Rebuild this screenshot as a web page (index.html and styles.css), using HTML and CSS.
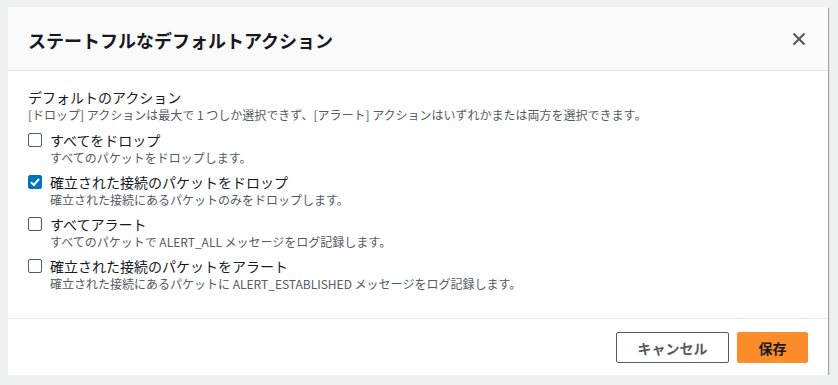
FILE: index.html
```html
<!DOCTYPE html>
<html lang="ja">
<head>
<meta charset="utf-8">
<link rel="stylesheet" href="styles.css">
</head>
<body>
<div class="modal">
  <div class="header">
    <h2 class="title">ステートフルなデフォルトアクション</h2>
    <svg class="close" width="14" height="14" viewBox="0 0 14 14"><path d="M1.5 1.5 L12.5 12.5 M12.5 1.5 L1.5 12.5" stroke="#545b64" stroke-width="2.2" fill="none"/></svg>
  </div>
  <div class="body">
    <div class="label">デフォルトのアクション</div>
    <div class="hint">[ドロップ] アクションは最大で 1 つしか選択できず、[アラート] アクションはいずれかまたは両方を選択できます。</div>
    <div class="options">
      <div class="opt">
        <span class="box"></span>
        <div class="txt"><div class="name">すべてをドロップ</div><div class="desc">すべてのパケットをドロップします。</div></div>
      </div>
      <div class="opt">
        <span class="box checked"><svg width="14" height="14" viewBox="0 0 14 14"><path d="M3 7.2 L5.9 10 L11 4" stroke="#fff" stroke-width="2" fill="none"/></svg></span>
        <div class="txt"><div class="name">確立された接続のパケットをドロップ</div><div class="desc">確立された接続にあるパケットのみをドロップします。</div></div>
      </div>
      <div class="opt">
        <span class="box"></span>
        <div class="txt"><div class="name">すべてアラート</div><div class="desc">すべてのパケットで ALERT_ALL メッセージをログ記録します。</div></div>
      </div>
      <div class="opt">
        <span class="box"></span>
        <div class="txt"><div class="name">確立された接続のパケットをアラート</div><div class="desc">確立された接続にあるパケットに ALERT_ESTABLISHED メッセージをログ記録します。</div></div>
      </div>
    </div>
  </div>
  <div class="footer">
    <button class="btn cancel">キャンセル</button>
    <button class="btn save">保存</button>
  </div>
</div>
</body>
</html>
```
FILE: styles.css
```css
html, body { margin: 0; padding: 0; }
body {
  background: #eff1f0;
  font-family: "Noto Sans CJK JP", "Noto Sans", sans-serif;
  color: #16191f;
  padding: 7px 10px 0 8px;
}
.modal {
  width: 820px;
  height: 368px;
  background: #fff;
  box-shadow: 1px 1px 1px 0 rgba(0,28,36,0.35);
  display: flex;
  flex-direction: column;
}
.header {
  height: 63px;
  background: #fafafa;
  border-bottom: 1px solid #e6e7e8;
  display: flex;
  align-items: center;
  justify-content: space-between;
  padding: 0 22px 0 20px;
}
.title {
  margin: 0;
  font-size: 18px;
  font-weight: 700;
  line-height: 24px;
  padding-top: 2px;
}
.close { display: block; margin-top: 1px; }
.body {
  flex: 1;
  padding: 16px 20px 0 20px;
  border-bottom: 1px solid #e6e7e8;
}
.label { font-size: 14px; line-height: 20px; }
.hint { font-size: 12px; line-height: 16px; color: #545b64; }
.options { margin-top: 7px; display: flex; flex-direction: column; gap: 6px; }
.opt { display: flex; align-items: flex-start; gap: 8px; }
.box {
  width: 14px; height: 14px; box-sizing: border-box;
  border: 1px solid #545b64; border-radius: 2px;
  margin-top: 3px;
  display: flex;
}
.box.checked { background: #0073bb; border-color: #0073bb; }
.box.checked svg { margin: -1px; }
.name { font-size: 14px; line-height: 20px; }
.desc { font-size: 12px; line-height: 16px; color: #545b64; }
.footer {
  height: 56px;
  display: flex;
  justify-content: flex-end;
  align-items: flex-start;
  gap: 8px;
  padding: 13px 20px 0 0;
  box-sizing: border-box;
}
.btn {
  font-family: "Noto Sans CJK JP", sans-serif;
  font-size: 14px;
  font-weight: 700;
  height: 31px;
  border-radius: 2px;
  padding: 0;
  cursor: pointer;
}
.cancel { width: 113px; background: #fff; border: 1px solid #545b64; color: #545b64; }
.save { width: 71px; background: #fd8d2a; border: 1px solid #fd8d2a; color: #16191f; }
```
